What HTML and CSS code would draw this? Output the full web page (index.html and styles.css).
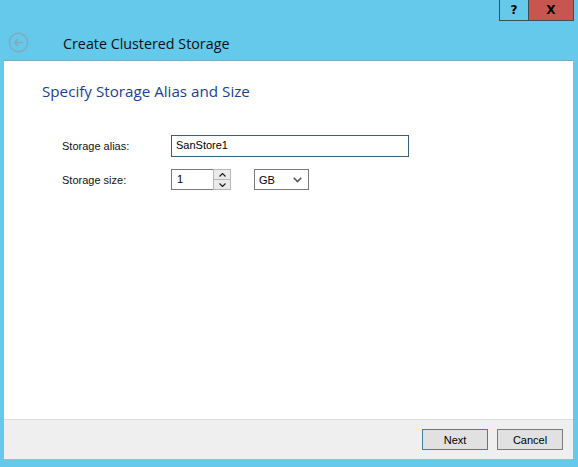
FILE: index.html
```html
<!DOCTYPE html>
<html>
<head>
<meta charset="utf-8">
<link rel="stylesheet" href="styles.css">
</head>
<body>
<div class="window">
  <div class="titlebar">
    <div class="tb-btn help">?</div>
    <div class="tb-btn close">X</div>
  </div>
  <div class="header">
    <svg class="back" width="21" height="21" viewBox="0 0 21 21">
      <circle cx="10.5" cy="10.5" r="9.2" fill="none" stroke="#86a9b9" stroke-width="1.4"/>
      <path d="M15 10.5H6.5M10 7L6.5 10.5L10 14" fill="none" stroke="#86a9b9" stroke-width="1.4"/>
    </svg>
    <div class="title">Create Clustered Storage</div>
  </div>
  <div class="panel">
    <div class="content">
      <h1 class="heading">Specify Storage Alias and Size</h1>
      <div class="form">
        <div class="row">
          <label class="lbl">Storage alias:</label>
          <div class="textbox">SanStore1</div>
        </div>
        <div class="row">
          <label class="lbl">Storage size:</label>
          <div class="spin">
            <div class="spin-val">1</div>
            <div class="spin-btns">
              <div class="spin-btn">
                <svg width="7" height="4" viewBox="0 0 7 4"><path d="M0.5 3.5L3.5 0.5L6.5 3.5" fill="none" stroke="#222" stroke-width="1.2"/></svg>
              </div>
              <div class="spin-btn">
                <svg width="7" height="4" viewBox="0 0 7 4"><path d="M0.5 0.5L3.5 3.5L6.5 0.5" fill="none" stroke="#222" stroke-width="1.2"/></svg>
              </div>
            </div>
          </div>
          <div class="combo">
            <span>GB</span>
            <svg width="9" height="6" viewBox="0 0 9 6"><path d="M0.8 0.8L4.5 4.6L8.2 0.8" fill="none" stroke="#555" stroke-width="1.6"/></svg>
          </div>
        </div>
      </div>
    </div>
    <div class="footer">
      <button class="btn primary">Next</button>
      <button class="btn">Cancel</button>
    </div>
  </div>
</div>
</body>
</html>
```

FILE: styles.css
```css
html, body {
  margin: 0;
  padding: 0;
}
body {
  width: 578px;
  height: 467px;
  background: #64c9ea;
  overflow: hidden;
  font-family: "Liberation Sans", Arial, sans-serif;
}
.window {
  position: relative;
  height: 467px;
}
.titlebar {
  height: 21px;
  display: flex;
  justify-content: flex-end;
  padding-right: 4px;
}
.tb-btn {
  border: 1px solid #3b4e5a;
  border-top: none;
  display: flex;
  align-items: center;
  justify-content: center;
  font-family: "DejaVu Sans", sans-serif;
  font-weight: bold;
  font-size: 12px;
  color: #000;
  box-sizing: border-box;
  height: 21px;
}
.help {
  width: 29px;
  background: #64c9ea;
  border-right: none;
}
.close {
  width: 46px;
  background: #c75550;
}
.header {
  height: 39px;
  display: flex;
  align-items: center;
  padding-left: 8px;
}
.back {
  margin-top: 4px;
}
.title {
  margin-left: 34px;
  font-family: "Open Sans", sans-serif;
  font-size: 14.3px;
  color: #111;
  margin-top: 6px;
}
.panel {
  margin: 0 5px 0 4px;
  border-top: 1px solid #7aa9bf;
  background: #fff;
  display: flex;
  flex-direction: column;
}
.content {
  height: 358px;
  box-sizing: border-box;
  padding: 20px 0 0 38px;
}
.heading {
  margin: 0;
  font-family: "Open Sans", sans-serif;
  font-weight: normal;
  font-size: 15.2px;
  color: #1c3f94;
}
.form {
  margin-top: 34px;
  padding-left: 20px;
  display: flex;
  flex-direction: column;
  gap: 12px;
}
.row {
  display: flex;
  align-items: center;
}
.lbl {
  width: 109px;
  font-size: 11px;
  color: #111;
}
.textbox {
  width: 238px;
  height: 22px;
  box-sizing: border-box;
  border: 1px solid #3f5f7e;
  font-size: 11px;
  padding: 3px 0 0 4px;
  color: #000;
}
.spin {
  display: flex;
  height: 21px;
}
.spin-val {
  width: 42px;
  height: 21px;
  box-sizing: border-box;
  border: 1px solid #7a7a7a;
  border-right: none;
  font-size: 11px;
  padding: 3px 0 0 5px;
}
.spin-btns {
  width: 18px;
  display: flex;
  flex-direction: column;
  border: 1px solid #b7b7b7;
  box-sizing: border-box;
  background: #b7b7b7;
  gap: 1px;
}
.spin-btn {
  flex: 1;
  background: #eaeaea;
  display: flex;
  align-items: center;
  justify-content: center;
}
.combo {
  margin-left: 23px;
  width: 55px;
  height: 21px;
  box-sizing: border-box;
  border: 1px solid #7a7a7a;
  display: flex;
  align-items: center;
  justify-content: space-between;
  padding: 0 6px 0 4px;
  font-size: 11px;
}
.footer {
  height: 41px;
  box-sizing: border-box;
  background: #efefef;
  border-top: 1px solid #dcdcdc;
  border-bottom: 1px solid #a8b8c0;
  display: flex;
  justify-content: flex-end;
  align-items: center;
  gap: 9px;
  padding: 0 10px 0 0;
}
.btn {
  width: 66px;
  height: 21px;
  box-sizing: border-box;
  background: #e1e1e1;
  border: 1px solid #7a7a7a;
  font-family: "Liberation Sans", Arial, sans-serif;
  font-size: 11px;
  color: #000;
  padding: 0;
}
.btn.primary {
  border-color: #3c7fb1;
}
```
